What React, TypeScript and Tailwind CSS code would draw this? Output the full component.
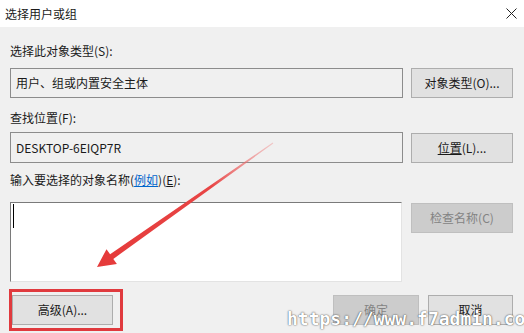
import React from "react";

const font = { fontFamily: '"Microsoft YaHei", "Noto Sans CJK SC", "Noto Sans", sans-serif' };

const Btn = ({
  children,
  disabled,
  className = "",
}: {
  children: React.ReactNode;
  disabled?: boolean;
  className?: string;
}) => (
  <button
    className={`h-[30px] flex items-center justify-center text-[12px] border ${
      disabled
        ? "bg-[#cccccc] border-[#bfbfbf] text-[#838383]"
        : "bg-[#e1e1e1] border-[#adadad] text-[#1a1a1a]"
    } ${className}`}
  >
    {children}
  </button>
);

const App = () => {
  return (
    <div
      className="relative w-[524px] h-[333px] overflow-hidden bg-[#f0f0f0] text-[#1a1a1a]"
      style={font}
    >
      {/* title bar */}
      <div className="h-[27px] bg-white flex items-center justify-between pl-[5px] pr-[6px]">
        <span className="text-[12px]">选择用户或组</span>
        <svg width="11" height="11" viewBox="0 0 11 11" className="mr-[1px]">
          <path d="M0.5 0.5L10.5 10.5M10.5 0.5L0.5 10.5" stroke="#222" strokeWidth="1" />
        </svg>
      </div>

      <div className="pl-[10px] pr-[11px] flex flex-col">
        <p className="mt-[16px] h-4 leading-4 text-[12px]">选择此对象类型(S):</p>
        <div className="mt-[9px] flex gap-[8px]">
          <div className="w-[393px] h-[30px] border border-[#8c8c8c] flex items-center px-[5px] text-[12px]">
            用户、组或内置安全主体
          </div>
          <Btn className="w-[102px]">对象类型(O)...</Btn>
        </div>

        <p className="mt-[12px] h-4 leading-4 text-[12px]">查找位置(F):</p>
        <div className="mt-[6px] flex gap-[8px]">
          <div className="w-[393px] h-[31px] border border-[#8c8c8c] flex items-center px-[5px] text-[12px]">
            DESKTOP-6EIQP7R
          </div>
          <Btn className="w-[102px] mt-[1px] h-[29px]">
            <span className="underline">位置</span>(L)...
          </Btn>
        </div>

        <p className="mt-[9px] h-4 leading-4 text-[12px]">
          输入要选择的对象名称(<span className="text-[#0066cc] underline">例如</span>)(
          <span className="underline">E</span>):
        </p>
        <div className="mt-[14px] flex gap-[9px]">
          <div className="w-[392px] h-[80px] bg-white border border-[#7a7a7a] border-r-[#e3e3e3] border-b-[#e3e3e3] pl-[2px] pt-[1px]">
            <div className="w-[1px] h-[24px] bg-black" />
          </div>
          <Btn disabled className="w-[102px] h-[29px] mt-[1px]">
            检查名称(C)
          </Btn>
        </div>

        <div className="mt-[13px] flex items-center">
          <div className="relative ml-[2px]">
            <Btn className="w-[101px]">高级(A)...</Btn>
            <div className="absolute -left-[3px] -top-[6px] w-[114px] h-[42px] border-[3px] border-[#e03a3e]" />
          </div>
          <div className="ml-auto flex gap-[9px]">
            <Btn disabled className="w-[86px]">
              确定
            </Btn>
            <Btn className="w-[85px]">取消</Btn>
          </div>
        </div>
      </div>

      {/* annotation arrow */}
      <svg className="absolute left-0 top-0 pointer-events-none" width="524" height="333">
        <defs>
          <linearGradient id="arrowFade" x1="273" y1="143" x2="97" y2="267" gradientUnits="userSpaceOnUse">
            <stop offset="0" stopColor="#f08a8a" stopOpacity="0.4" />
            <stop offset="0.35" stopColor="#e84545" />
            <stop offset="1" stopColor="#e53a3a" />
          </linearGradient>
        </defs>
        <polygon
          points="97,267 106.5,249.2 110.1,254.3 272.7,142.6 273.3,143.4 113.3,258.9 116.9,264"
          fill="url(#arrowFade)"
        />
      </svg>

      {/* watermark */}
      <div
        className="absolute left-[287px] top-[305px] text-white font-bold text-[18px] whitespace-nowrap [text-shadow:0_0_2px_rgba(0,0,0,0.55),0_0_1px_rgba(0,0,0,0.5)]"
        style={{ fontFamily: '"DejaVu Sans Mono", "Liberation Mono", monospace' }}
      >
        https://www.f7admin.com
      </div>
    </div>
  );
};

export default App;
